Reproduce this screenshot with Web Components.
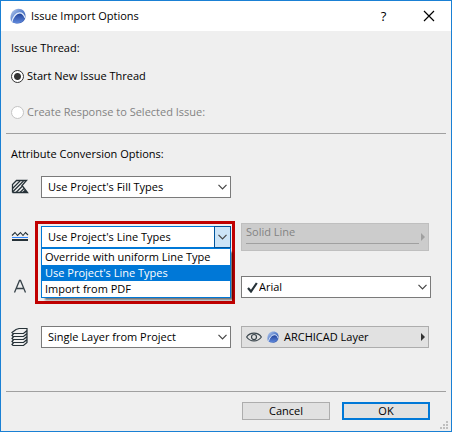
<!DOCTYPE html>
<html lang="en">
<head>
<meta charset="utf-8">
<title>Issue Import Options</title>
<style>
  html, body { margin: 0; height: 100%; }
  body { background: #efefef; }
</style>
</head>
<body>
<issue-dialog></issue-dialog>

<script>
const define = (name, html, setup) => {
  const template = document.createElement('template');
  template.innerHTML = html;
  customElements.define(name, class extends HTMLElement {
    connectedCallback() {
      if (this.shadowRoot) return;
      this.attachShadow({ mode: 'open' }).append(template.content.cloneNode(true));
      if (setup) setup.call(this, this.shadowRoot);
    }
  });
};

/* Round application logo */
define('app-logo', `
<style>
  :host { display: block; width: 16px; height: 16px; flex: none; }
  :host([small]) { width: 12px; height: 12px; }
  svg { display: block; width: 100%; height: 100%; }
</style>
<svg viewBox="0 0 16 16" aria-hidden="true">
  <defs>
    <linearGradient id="ball" x1="0" y1="0" x2="1" y2="1"><stop offset="0" stop-color="#c3d4f1"/><stop offset=".45" stop-color="#5e85cf"/><stop offset="1" stop-color="#2a4fa3"/></linearGradient>
    <linearGradient id="hill" x1="0" y1="0" x2="0" y2="1"><stop offset="0" stop-color="#23449a"/><stop offset="1" stop-color="#5f88dc"/></linearGradient>
  </defs>
  <path d="M1 13C-1 6 3 .7 8.500 .7C13 .7 15.700 4 15.500 8.500C15.300 12.500 12 15.500 8 15.500C5.500 15.500 2.500 15 1 13Z" fill="url(#ball)"/>
  <path d="M2.500 14.300C3.500 10 6 6 9.500 5.600C12 5.400 13.800 7.500 14.800 10.800C13 14.500 8 16.300 2.500 14.300Z" fill="url(#hill)"/>
  <path d="M1.800 14C3 9.500 5.800 5.300 9.500 4.900C12 4.700 13.800 6.500 15 9.800" fill="none" stroke="#e3ecfb" stroke-width="1.200"/>
</svg>`);

define('title-bar', `
<style>
  :host { display: flex; align-items: center; height: 30px; background: #fff; padding-left: 9px; }
  h1 { flex: 1; margin: 0 0 0 5px; font-size: 11px; font-weight: 400; line-height: 16px; }
  button { width: 45px; height: 30px; border: 0; padding: 0; background: none; color: inherit; font: 400 13px/28px "Open Sans", sans-serif; display: grid; place-items: center; }
</style>
<app-logo></app-logo>
<h1><slot></slot></h1>
<button type="button" aria-label="Help">?</button>
<button type="button" aria-label="Close"><svg width="12" height="12" viewBox="0 0 12 12"><path d="M1 1L11 11M11 1L1 11" stroke="#000" stroke-width="1.200"/></svg></button>`);

define('radio-choice', `
<style>
  :host { display: flex; align-items: center; height: 36px; }
  :host([disabled]) { color: #838383; }
  label { display: flex; align-items: center; gap: 3px; }
  input { appearance: none; width: 13px; height: 13px; margin: 0; border: 1px solid #333; border-radius: 50%; background: #fff; }
  input:checked { background: radial-gradient(circle, #333 3px, #fff 4px); }
  input:disabled { border-color: #c4c4c4; }
</style>
<label><input type="radio" name="thread"><slot></slot></label>`, function (root) {
  const input = root.querySelector('input');
  input.checked = this.hasAttribute('checked');
  input.disabled = this.hasAttribute('disabled');
});

/* Drop-down; with "open" it also shows its list and a highlight frame */
define('combo-box', `
<style>
  :host { display: block; position: relative; min-width: 0; }
  select { display: block; position: relative; appearance: none; box-sizing: border-box; width: 100%; height: 22px; margin: 0; border: 1px solid #7a7a7a; border-radius: 0; padding: 0 24px 0 6px; background: #fff; color: #000; font: inherit; line-height: 20px; }
  .arrow { position: absolute; right: 0; top: 0; width: 17px; height: 22px; pointer-events: none; box-sizing: border-box; display: grid; place-items: center; }
  .mark { position: absolute; left: 6px; top: 6px; pointer-events: none; display: none; }
  .frame, ul { display: none; }
  :host([checkmark]) .mark { display: block; }
  :host([checkmark]) select { padding-left: 17px; }
  :host([open]) select { border-color: #0078d7; }
  :host([open]) .arrow { background: #cce4f7; border: 1px solid #00549c; }
  :host([open]) .frame { display: block; position: absolute; inset: -5px -4px -56px -6px; border: 3px solid #c00000; background: #efefef; }
  :host([open]) ul { display: block; position: absolute; top: 22px; left: 0; right: 0; margin: 0; padding: 0; list-style: none; border: 1px solid #0078d7; background: #fff; box-shadow: 3px 3px 2px -1px #0008; }
  li { padding: 0 3px; line-height: 16px; white-space: nowrap; }
  li[aria-selected=true] { background: #0078d7; color: #fff; }
</style>
<div class="frame"></div>
<select></select>
<svg class="mark" width="11" height="11" viewBox="0 0 11 11" aria-hidden="true"><path d="M1 6L4 9.500L9.800 1" fill="none" stroke="#263238" stroke-width="2.200"/></svg>
<span class="arrow"><svg width="9" height="6" viewBox="0 0 9 6" aria-hidden="true"><path d="M.5 .8L4.500 4.800L8.500 .8" fill="none" stroke="#444" stroke-width="1.200"/></svg></span>
<ul role="listbox"></ul>`, function (root) {
  const select = root.querySelector('select');
  const list = root.querySelector('ul');
  const value = this.getAttribute('value');
  const options = (this.getAttribute('options') || value).split('|');
  select.setAttribute('aria-label', this.getAttribute('label'));
  list.setAttribute('aria-label', this.getAttribute('label'));
  for (const text of options) {
    select.add(new Option(text, text, false, text === value));
    if (this.hasAttribute('open')) {
      const item = document.createElement('li');
      item.setAttribute('role', 'option');
      item.setAttribute('aria-selected', text === value);
      item.textContent = text;
      list.append(item);
    }
  }
});

define('popup-button', `
<style>
  :host { display: block; padding-right: 2px; }
  button { display: flex; align-items: center; gap: 5px; box-sizing: border-box; width: 100%; height: 22px; margin: 0; padding: 0 3px 0 4px; border: 1px solid #adadad; background: #e1e1e1; color: #000; font: inherit; text-align: left; }
  .text { flex: 1; line-height: 16px; }
  .arrow { flex: none; fill: #333; }
  button:disabled { height: 28px; gap: 2px; background: #ccc; border-color: #bfbfbf; color: #838383; }
  button:disabled .text { border-bottom: 1px solid #a0a0a0; padding-bottom: 3px; margin-bottom: 6px; }
  button:disabled .arrow { fill: #a0a0a0; }
</style>
<button type="button"><slot name="icon"></slot><span class="text"><slot></slot></span><svg class="arrow" width="4" height="8" viewBox="0 0 4 8" aria-hidden="true"><path d="M0 0L4 4L0 8Z"/></svg></button>`, function (root) {
  root.querySelector('button').disabled = this.hasAttribute('disabled');
});

define('attribute-row', `
<style>
  :host { display: grid; grid-template-columns: 20px minmax(0, 1fr) minmax(0, 1fr); column-gap: 10px; align-items: center; height: 50px; }
  ::slotted([slot=side]) { grid-column: 3; }
</style>
<slot name="icon"></slot><slot></slot><slot name="side"></slot>`);

define('push-button', `
<style>
  :host { display: block; width: 88px; }
  button { display: block; box-sizing: border-box; width: 100%; height: 18px; margin: 0; padding: 0; border: 1px solid #adadad; background: #e1e1e1; color: #000; font: inherit; line-height: 14px; }
  :host([primary]) button { border: 2px solid #0078d7; }
</style>
<button type="button"><slot></slot></button>`);

define('issue-dialog', `
<style>
  :host { display: flex; flex-direction: column; box-sizing: border-box; min-height: 100%; border: 1px solid #1a80d4; background: #efefef; color: #000; font: 11px/16px "Open Sans", "Noto Sans", sans-serif; position: relative; }
  h2 { margin: 0; font-size: 11px; font-weight: 400; line-height: 16px; }
  .thread { padding: 9px 10px 3px; }
  .thread h2 { margin-bottom: 2px; }
  .attributes { padding: 12px 20px 0 10px; }
  hr { width: auto; height: 1px; margin: 0 5px; border: 0; background: #a0a0a0; }
  footer { margin-top: auto; }
  .buttons { display: flex; justify-content: flex-end; gap: 12px; padding: 10px 21px 11px; }
  .grip { position: absolute; right: 3px; bottom: 2px; fill: #bfbfbf; }
  svg { display: block; }
</style>
<title-bar>Issue Import Options</title-bar>
<section class="thread">
  <h2>Issue Thread:</h2>
  <radio-choice checked>Start New Issue Thread</radio-choice>
  <radio-choice disabled>Create Response to Selected Issue:</radio-choice>
</section>
<hr>
<section class="attributes">
  <h2>Attribute Conversion Options:</h2>
  <attribute-row>
    <svg slot="icon" width="18" height="16" viewBox="0 0 18 16" aria-hidden="true">
      <path d="M1.500 13.500V5.500L5.500 1.500H15.500L11 6.500L16.500 13.500H1.500" fill="none" stroke="#263238" stroke-width="1.300"/>
      <path d="M1.500 9.500L9 2M1.500 13L12.500 2M5 13.500L11.500 7M9 13.500L13 9.500" fill="none" stroke="#263238" stroke-width="1.200"/>
      <path d="M11 13.500L14 10.500L17 14Z" fill="#263238"/>
    </svg>
    <combo-box label="Fill types" value="Use Project's Fill Types"></combo-box>
  </attribute-row>
  <attribute-row>
    <svg slot="icon" width="18" height="12" viewBox="0 0 18 12" aria-hidden="true">
      <path d="M1 4.500L4 1.500L6.500 4.500L9.500 1.500L12 4.500L14.500 1.500L17 4" fill="none" stroke="#263238" stroke-width="1.100"/>
      <path d="M1 6h16v1H1z" fill="#2f86ff"/><path d="M1 8h16v2H1z" fill="#263238"/>
    </svg>
    <combo-box open label="Line types" value="Use Project's Line Types" options="Override with uniform Line Type|Use Project's Line Types|Import from PDF"></combo-box>
    <popup-button slot="side" disabled>Solid Line</popup-button>
  </attribute-row>
  <attribute-row>
    <svg slot="icon" width="18" height="16" viewBox="0 0 18 16" aria-hidden="true">
      <path d="M3.500 13.500L8.500 1.500H9.500L14.500 13.500M5 9.500H13" fill="none" stroke="#37434a" stroke-width="1.300"/>
    </svg>
    <combo-box slot="side" checkmark label="Font" value="Arial"></combo-box>
  </attribute-row>
  <attribute-row>
    <svg slot="icon" width="18" height="20" viewBox="0 0 18 20" aria-hidden="true">
      <g fill="#efefef" stroke="#263238" stroke-width="1.200">
        <path d="M1 17.500L3.500 14.500L16 13.500V15.500L12.500 18.500H2Z"/>
        <path d="M1 14.500L3.500 11.500L16 10.500V12.500L12.500 15.500H2Z"/>
        <path d="M1 11.500L3.500 8.500L16 7.500V9.500L12.500 12.500H2Z"/>
        <path d="M1 8.500L3.500 5.500L16 4.500V6.500L12.500 9.500H2Z"/>
        <path d="M1 5.500L5 2.500L8 1.500H16V3.500L12.500 6.500H2Z"/>
      </g>
    </svg>
    <combo-box label="Layers" value="Single Layer from Project"></combo-box>
    <popup-button slot="side">
      <svg slot="icon" width="16" height="10" viewBox="0 0 16 10" aria-hidden="true"><path d="M.6 5C4 -.2 12 -.2 15.400 5C12 10.200 4 10.200 .6 5Z" fill="none" stroke="#37434a" stroke-width="1.100"/><circle cx="8" cy="5" r="2.500" fill="none" stroke="#37434a" stroke-width="1.200"/></svg>
      <app-logo slot="icon" small></app-logo>ARCHICAD Layer
    </popup-button>
  </attribute-row>
</section>
<footer>
  <hr>
  <div class="buttons"><push-button>Cancel</push-button><push-button primary>OK</push-button></div>
</footer>
<svg class="grip" width="8" height="8" viewBox="0 0 8 8" aria-hidden="true"><path d="M6 0h2v2H6zM3 3h2v2H3zM6 3h2v2H6zM0 6h2v2H0zM3 6h2v2H3zM6 6h2v2H6z"/></svg>`);
</script>
</body>
</html>
